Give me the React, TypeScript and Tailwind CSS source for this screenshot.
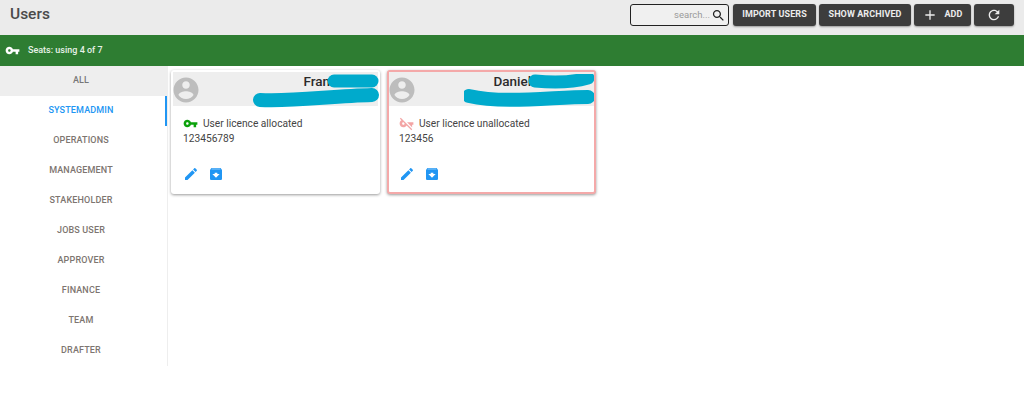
import type { ReactNode } from "react";

const tabs = ["ALL", "SYSTEMADMIN", "OPERATIONS", "MANAGEMENT", "STAKEHOLDER", "JOBS USER", "APPROVER", "FINANCE", "TEAM", "DRAFTER"];

const KEY = "M12.65 10C11.83 7.67 9.61 6 7 6c-3.31 0-6 2.69-6 6s2.69 6 6 6c2.61 0 4.83-1.67 5.65-4H17v4h4v-4h2v-4H12.65zM7 14c-1.1 0-2-.9-2-2s.9-2 2-2 2 .9 2 2-.9 2-2 2z";
const KEY_OFF = "M20.83 18H21v-4h2v-4H12.83l8 8zM19.78 22.61l1.41-1.41L2.81 2.81 1.39 4.22l2.59 2.59C2.2 7.85 1 9.79 1 12c0 3.31 2.69 6 6 6 2.21 0 4.15-1.2 5.18-2.99l7.6 7.6zM8.99 11.82c.01.06.01.12.01.18 0 1.1-.9 2-2 2s-2-.9-2-2 .9-2 2-2c.06 0 .12 0 .18.01l1.81 1.81z";
const PERSON = "M12 2C6.48 2 2 6.48 2 12s4.48 10 10 10 10-4.48 10-10S17.52 2 12 2zm0 3c1.66 0 3 1.34 3 3s-1.34 3-3 3-3-1.34-3-3 1.34-3 3-3zm0 14.2c-2.5 0-4.71-1.28-6-3.22.03-1.99 4-3.08 6-3.08 1.99 0 5.97 1.09 6 3.08-1.29 1.94-3.5 3.22-6 3.22z";
const EDIT = "M3 17.25V21h3.75L17.81 9.94l-3.75-3.75L3 17.25zM20.71 7.04c.39-.39.39-1.02 0-1.41l-2.34-2.34c-.39-.39-1.02-.39-1.41 0l-1.83 1.83 3.75 3.75 1.83-1.83z";
const ARCHIVE = "M20.54 5.23l-1.39-1.68C18.88 3.21 18.47 3 18 3H6c-.47 0-.88.21-1.16.55L3.46 5.23C3.17 5.57 3 6.02 3 6.5V19c0 1.1.9 2 2 2h14c1.1 0 2-.9 2-2V6.5c0-.48-.17-.93-.46-1.27zM12 17.5L6.5 12H10v-2h4v2h3.5L12 17.5zM5.12 5l.81-1h12l.94 1H5.12z";
const SEARCH = "M15.5 14h-.79l-.28-.27C15.41 12.59 16 11.11 16 9.5 16 5.91 13.09 3 9.5 3S3 5.91 3 9.5 5.91 16 9.5 16c1.61 0 3.09-.59 4.23-1.57l.27.28v.79l5 4.99L20.49 19l-4.99-5zm-6 0C7.01 14 5 11.99 5 9.5S7.01 5 9.5 5 14 7.01 14 9.5 11.99 14 9.5 14z";
const REFRESH = "M17.65 6.35C16.2 4.9 14.21 4 12 4c-4.42 0-7.99 3.58-7.99 8s3.57 8 7.99 8c3.73 0 6.84-2.55 7.73-6h-2.08c-.82 2.33-3.04 4-5.65 4-3.31 0-6-2.69-6-6s2.69-6 6-6c1.66 0 3.14.69 4.22 1.78L13 11h7V4l-2.35 2.35z";
const PLUS = "M19 13h-6v6h-2v-6H5v-2h6V5h2v6h6v2z";

function Icon({ d, className }: { d: string; className: string }) {
  return (
    <svg viewBox="0 0 24 24" fill="currentColor" className={className}>
      <path d={d} />
    </svg>
  );
}

function TopButton({ children, className }: { children: ReactNode; className: string }) {
  return (
    <button className={`flex h-[22px] items-center justify-center rounded-[3px] bg-[#3d3d3d] text-[9px] font-bold tracking-[0.1px] text-[#ececec] shadow-[0_1px_2px_rgba(0,0,0,0.35)] ${className}`}>
      {children}
    </button>
  );
}

function Card(props: {
  name: string;
  licence: string;
  phone: string;
  allocated: boolean;
  className: string;
  nameClass: string;
  scribble: ReactNode;
}) {
  return (
    <div className={`relative flex h-[124px] w-[209px] flex-col rounded-[3px] bg-white shadow-[0_1px_3px_rgba(0,0,0,0.4)] ${props.className}`}>
      <div className="flex h-[34px] shrink-0 bg-[#eeeeee]">
        <Icon d={PERSON} className="ml-[-2.5px] mt-[2.5px] h-[30px] w-[30px] shrink-0 text-[#bdbdbd]" />
        <div className={`flex-1 pt-[1px] text-[13.5px] font-medium leading-[16px] text-[#2b2b2b] ${props.nameClass}`}>{props.name}</div>
      </div>
      {props.scribble}
      <div className="flex items-center gap-[5px] pl-[10px] pt-[10px] text-[10.2px] leading-[14px] text-[#444444]">
        <Icon d={props.allocated ? KEY : KEY_OFF} className={props.allocated ? "h-[15px] w-[15px] text-[#0ca20c]" : "h-[15px] w-[15px] text-[#f3a5a5]"} />
        <span>{props.licence}</span>
      </div>
      <div className="pl-[10px] pt-[1px] text-[10.2px] leading-[14px] text-[#444444]">{props.phone}</div>
      <div className="flex gap-[9px] pl-[10px] pt-[20px]">
        <Icon d={EDIT} className="h-[16px] w-[16px] text-[#2196f3]" />
        <Icon d={ARCHIVE} className="h-[16px] w-[16px] text-[#2196f3]" />
      </div>
    </div>
  );
}

export default function App() {
  return (
    <div className="h-[412px] w-[1024px] overflow-hidden bg-white font-['Roboto',sans-serif]">
      <header className="flex h-[35px] items-center bg-[#ebebeb] pb-[5px] pl-[10px] pr-[10px]">
        <h1 className="text-[15.5px] font-medium text-[#4a4a4a]">Users</h1>
        <div className="ml-auto flex items-center gap-[3px]">
          <div className="mr-[1px] flex h-[22px] w-[99px] items-center justify-end rounded-[3px] border border-[#222222] bg-[#f0f0f0] pr-[2px] text-[9.5px] text-[#9a9a9a]">
            <span>search...</span>
            <Icon d={SEARCH} className="ml-[1px] h-[15px] w-[15px] text-[#222222]" />
          </div>
          <TopButton className="w-[83px]">IMPORT USERS</TopButton>
          <TopButton className="w-[92px]">SHOW ARCHIVED</TopButton>
          <TopButton className="w-[57px] gap-[6px]">
            <Icon d={PLUS} className="h-[16px] w-[16px] text-[#ececec]" />
            ADD
          </TopButton>
          <TopButton className="w-[40px]">
            <Icon d={REFRESH} className="h-[16px] w-[16px] text-[#ececec]" />
          </TopButton>
        </div>
      </header>

      <div className="flex h-[31px] items-center gap-[8px] bg-[#2e7d32] pl-[5px] text-[9px] font-medium text-[#e8f2e8]">
        <Icon d={KEY} className="h-[15px] w-[15px] text-white" />
        <span>Seats: using 4 of 7</span>
      </div>

      <div className="flex items-start">
        <nav className="w-[168px] shrink-0 border-r border-[#eeeeee]">
          {tabs.map((tab) => (
            <div
              key={tab}
              className={
                tab === "ALL"
                  ? "flex h-[30px] items-center justify-center bg-[#eeeeee] pr-[5px] text-[9px] font-medium tracking-[0.15px] text-[#777777]"
                  : tab === "SYSTEMADMIN"
                    ? "flex h-[30px] items-center justify-center border-r-2 border-[#2196f3] pr-[3px] text-[9px] font-medium tracking-[0.15px] text-[#2196f3]"
                    : "flex h-[30px] items-center justify-center pr-[5px] text-[9px] font-medium tracking-[0.15px] text-[#7d7570]"
              }
            >
              {tab}
            </div>
          ))}
        </nav>

        <main className="flex gap-[7px] pl-[3px] pt-[4px]">
          <Card
            name="Fran"
            licence="User licence allocated"
            phone="123456789"
            allocated
            className="px-[2px] pt-[2px]"
            nameClass="pl-[103px]"
            scribble={
              <svg className="absolute left-[80px] top-[4px] h-[34px] w-[130px]" viewBox="0 0 130 34" fill="none" stroke="#00aacc" strokeLinecap="round">
                <path d="M83 7 H121" strokeWidth="13" />
                <path d="M9 26 C40 28 80 22 121 21" strokeWidth="14" />
              </svg>
            }
          />
          <Card
            name="Daniel"
            licence="User licence unallocated"
            phone="123456"
            allocated={false}
            className="border-[2px] border-[#f4a9a9]"
            nameClass="pl-[77px]"
            scribble={
              <svg className="absolute left-[75px] top-[2px] h-[34px] w-[130px]" viewBox="0 0 130 34" fill="none" stroke="#00aacc" strokeLinecap="round">
                <path d="M71 7 C90 9 110 8 124 4" strokeWidth="13" />
                <path d="M5 22 C40 30 90 23 124 23" strokeWidth="14" />
              </svg>
            }
          />
        </main>
      </div>
    </div>
  );
}
